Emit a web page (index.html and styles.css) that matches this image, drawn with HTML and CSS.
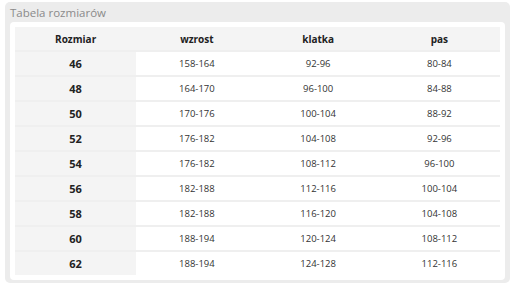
FILE: index.html
```html
<!DOCTYPE html>
<html lang="pl">
<head>
    <meta charset="UTF-8">
    <title>Tabela rozmiarów</title>
    <link rel="stylesheet" href="styles.css">
</head>
<body>

<div class="box">
    <div class="box-title">Tabela rozmiarów</div>
    <div class="box-inner">
        <table>
            <thead>
                <tr><th>Rozmiar</th><th>wzrost</th><th>klatka</th><th>pas</th></tr>
            </thead>
            <tbody>
                <tr><td>46</td><td>158-164</td><td>92-96</td><td>80-84</td></tr>
                <tr><td>48</td><td>164-170</td><td>96-100</td><td>84-88</td></tr>
                <tr><td>50</td><td>170-176</td><td>100-104</td><td>88-92</td></tr>
                <tr><td>52</td><td>176-182</td><td>104-108</td><td>92-96</td></tr>
                <tr><td>54</td><td>176-182</td><td>108-112</td><td>96-100</td></tr>
                <tr><td>56</td><td>182-188</td><td>112-116</td><td>100-104</td></tr>
                <tr><td>58</td><td>182-188</td><td>116-120</td><td>104-108</td></tr>
                <tr><td>60</td><td>188-194</td><td>120-124</td><td>108-112</td></tr>
                <tr><td>62</td><td>188-194</td><td>124-128</td><td>112-116</td></tr>
            </tbody>
        </table>
    </div>
</div>

</body>
</html>
```

FILE: styles.css
```css
body {
    font-family: "Open Sans", "Liberation Sans", sans-serif;
    background-color: #fff;
    margin: 0;
    padding: 2px 2px 0 5px;
}
.box {
    background: #ececec;
    border-radius: 5px;
    padding: 3px 5px 3px 5px;
}
.box-title {
    font-size: 11.5px;
    line-height: 16px;
    color: #8a8a8a;
    margin-bottom: 1px;
}
.box-inner {
    background: #fff;
    border-radius: 4px;
    padding: 5px;
}
table {
    width: 100%;
    border-collapse: collapse;
    table-layout: fixed;
}
th, td {
    height: 23px;
    padding: 0;
    text-align: center;
    font-size: 9.5px;
    color: #333;
    border-bottom: 2px solid #efefef;
}
th {
    background-color: #f4f4f4;
    font-weight: bold;
    font-size: 10px;
    color: #222;
}
tbody tr:last-child td {
    border-bottom: 0;
}
td:first-child {
    background-color: #f4f4f4;
    font-weight: bold;
    font-size: 11px;
    color: #222;
}
```
